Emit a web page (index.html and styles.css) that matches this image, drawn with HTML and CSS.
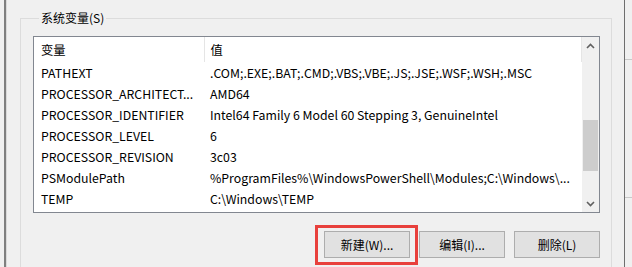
FILE: index.html
```html
<!DOCTYPE html>
<html lang="zh-CN">
<head>
    <meta charset="UTF-8">
    <meta name="viewport" content="width=device-width, initial-scale=1.0">
    <link rel="stylesheet" href="styles.css">
</head>
<body>

<div class="screen">
    <div class="dialog">
        <fieldset class="group">
            <legend class="group-title">系统变量(S)</legend>

            <div class="listview">
                <div class="list-body">
                    <table class="vars">
                        <colgroup>
                            <col class="col-name">
                            <col class="col-value">
                        </colgroup>
                        <thead>
                            <tr>
                                <th>变量</th>
                                <th>值</th>
                            </tr>
                        </thead>
                        <tbody>
                            <tr><td>PATHEXT</td><td>.COM;.EXE;.BAT;.CMD;.VBS;.VBE;.JS;.JSE;.WSF;.WSH;.MSC</td></tr>
                            <tr><td>PROCESSOR_ARCHITECT...</td><td>AMD64</td></tr>
                            <tr><td>PROCESSOR_IDENTIFIER</td><td>Intel64 Family 6 Model 60 Stepping 3, GenuineIntel</td></tr>
                            <tr><td>PROCESSOR_LEVEL</td><td>6</td></tr>
                            <tr><td>PROCESSOR_REVISION</td><td>3c03</td></tr>
                            <tr><td>PSModulePath</td><td>%ProgramFiles%\WindowsPowerShell\Modules;C:\Windows\...</td></tr>
                            <tr><td>TEMP</td><td>C:\Windows\TEMP</td></tr>
                        </tbody>
                    </table>
                </div>
                <div class="scrollbar">
                    <span class="scroll-arrow">
                        <svg width="9" height="6" viewBox="0 0 9 6"><path d="M1 5 L4.5 1.5 L8 5" fill="none" stroke="#606060" stroke-width="1.6"/></svg>
                    </span>
                    <div class="scroll-track">
                        <div class="scroll-thumb"></div>
                    </div>
                    <span class="scroll-arrow">
                        <svg width="9" height="6" viewBox="0 0 9 6"><path d="M1 1 L4.5 4.5 L8 1" fill="none" stroke="#606060" stroke-width="1.6"/></svg>
                    </span>
                </div>
            </div>

            <div class="actions">
                <button class="btn is-marked">新建(W)...</button>
                <button class="btn">编辑(I)...</button>
                <button class="btn">删除(L)</button>
            </div>
        </fieldset>
    </div>
    <div class="side">
        <div class="side-rule first"></div>
        <div class="side-rule second"></div>
    </div>
</div>

</body>
</html>
```

FILE: styles.css
```css
body {
    margin: 0;
    background-color: #f0f0f0;
    font-family: "Noto Sans CJK SC", "Noto Sans", sans-serif;
    font-size: 12px;
    color: #000;
}

.screen {
    width: 632px;
    height: 267px;
    display: flex;
    overflow: hidden;
}

.dialog {
    width: 621px;
    margin-left: 4px;
    padding: 10px 12px 0 14px;
    box-sizing: border-box;
    border-left: 2px solid #7f7f7f;
    border-right: 1px solid #6e6e6e;
    box-shadow: inset 1px 0 0 #d9d9d9;
}

.side {
    flex: 1;
}

.side-rule {
    height: 1px;
    background: #c9c9c9;
}

.side-rule.first {
    margin-top: 59px;
}

.side-rule.second {
    margin-top: 137px;
}

/* group box */
.group {
    margin: 0;
    padding: 10px 11px 0 12px;
    border: 1px solid #dcdcdc;
    min-width: 0;
    height: 300px;
}

.group-title {
    margin-left: 6px;
    padding: 0 2px;
    line-height: 16px;
}

/* list view */
.listview {
    display: flex;
    height: 175px;
    border: 1px solid #828790;
    background: #fff;
}

.list-body {
    flex: 1;
    overflow: hidden;
}

.vars {
    width: 100%;
    table-layout: fixed;
    border-collapse: collapse;
    font-size: 12.3px;
}

.col-name {
    width: 170px;
}

.vars th {
    height: 25px;
    padding: 0 0 0 6px;
    font-weight: 400;
    text-align: left;
    border-right: 1px solid #e5e5e5;
}

.vars th:first-child {
    padding-left: 7px;
}

.vars td {
    height: 21px;
    padding: 0 4px 0 6px;
    white-space: nowrap;
}

.vars td:first-child {
    padding-left: 7px;
}

.scrollbar {
    width: 17px;
    display: flex;
    flex-direction: column;
    background: #f0f0f0;
}

.scroll-arrow {
    height: 17px;
    display: flex;
    align-items: center;
    justify-content: center;
}

.scroll-track {
    flex: 1;
    padding-top: 66px;
}

.scroll-thumb {
    height: 51px;
    margin: 0 1px;
    background: #cdcdcd;
}

/* buttons */
.actions {
    display: flex;
    justify-content: flex-end;
    gap: 9px;
    margin-top: 18px;
}

.btn {
    width: 86px;
    height: 27px;
    padding: 0;
    background: #e1e1e1;
    border: 1px solid #adadad;
    font-family: "Noto Sans CJK SC", "Noto Sans", sans-serif;
    font-size: 12px;
    color: #000;
    position: relative;
}

.btn.is-marked::after {
    content: "";
    position: absolute;
    top: -7px;
    left: -10px;
    right: -9px;
    bottom: -8px;
    border: 3px solid #e8403c;
}
```
